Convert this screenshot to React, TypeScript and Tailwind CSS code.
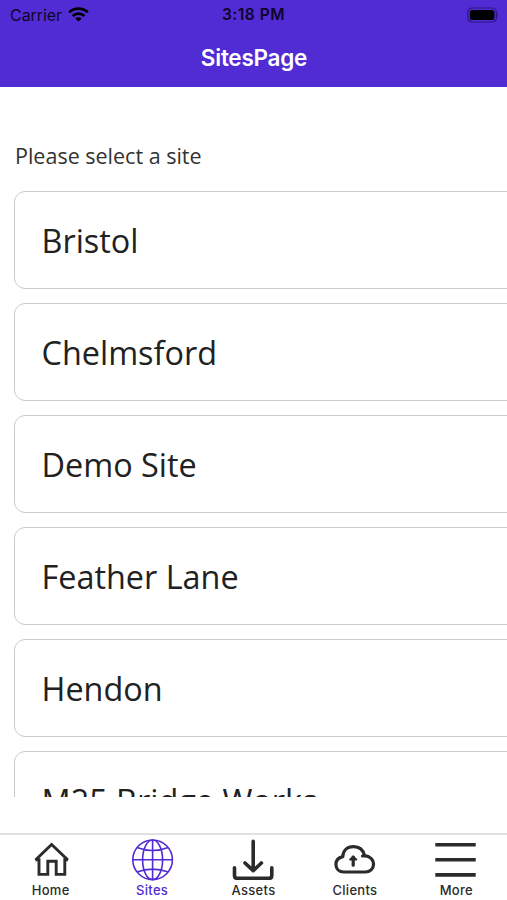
import type { ReactNode } from "react"
import clsx from "clsx"

const sites = ["Bristol", "Chelmsford", "Demo Site", "Feather Lane", "Hendon", "M25 Bridge Works"]

type Tab = {
  label: string
  active?: boolean
  icon: ReactNode
}

const tabs: Tab[] = [
  {
    label: "Home",
    icon: (
      <g strokeWidth="2.9">
        <path d="M6.5 22 22.6 6.4 38.9 22" strokeLinejoin="miter" />
        <path d="M6.5 21.8H10V36.4H18.8V23.2H27.2V36.4H35.8V21.8H38.9" />
      </g>
    ),
  },
  {
    label: "Sites",
    active: true,
    icon: (
      <g strokeWidth="1.6">
        <circle cx="22.6" cy="21.8" r="19.8" />
        <ellipse cx="22.6" cy="21.8" rx="10" ry="19.8" />
        <path d="M22.6 2V41.6M2.8 21.8H42.4M6.9 9.5Q22.6 15.5 38.3 9.5M6.9 34.1Q22.6 28.1 38.3 34.1" />
      </g>
    ),
  },
  {
    label: "Assets",
    icon: (
      <g strokeWidth="3.6" strokeLinecap="round" strokeLinejoin="round">
        <path d="M22.2 3.4V32M14 25 22.2 32.6 30.4 25" />
        <path d="M3.5 29.8V37.4Q3.5 40.3 6.4 40.3H37.9Q40.8 40.3 40.8 37.4V29.8" />
      </g>
    ),
  },
  {
    label: "Clients",
    icon: (
      <g strokeWidth="3.2" strokeLinejoin="round" strokeLinecap="round">
        <path d="M10.8 34H32.2C37 34 40.5 30.8 40.5 26.4C40.5 21.4 36.8 18.2 31.5 17.6C30.2 11.8 26.2 8.6 20.6 8.6C14 8.6 10 12.8 9.8 18.6C5.6 19.6 2.9 22.4 2.9 26.2C2.9 30.8 6.2 34 10.8 34Z" />
        <path d="M31.5 17.6 29.5 18" />
        <path d="M20.2 27.2V19" strokeWidth="3.2" />
        <path d="M17 21.6 20.2 18.4 23.4 21.6Z" strokeWidth="1.8" fill="currentColor" />
      </g>
    ),
  },
  {
    label: "More",
    icon: <path d="M1.3 6.7H41.7M1.3 21.8H41.7M1.3 36.9H41.7" strokeWidth="3.6" />,
  },
]

function StatusBar() {
  return (
    <div className="grid h-7 grid-cols-3 items-center pt-px pr-2 pl-2.5 text-[#0d0628]">
      <div className="flex items-center gap-1.5">
        <span className="text-[16px] tracking-[-0.05px]">Carrier</span>
        <svg width="21" height="15" viewBox="0 0 21 15" fill="none" stroke="#000" strokeWidth="2.7">
          <path d="M1.2 5.2C6.4 .4 14.6 .4 19.8 5.2" />
          <path d="M4.6 8.9C8 5.9 13 5.9 16.4 8.9" />
          <path d="M10.5 14.6 7.2 11.4C9.1 9.8 11.9 9.8 13.8 11.4Z" fill="#000" stroke="none" />
        </svg>
      </div>
      <span className="-ml-0.5 text-center text-[15.5px] font-semibold tracking-[0.5px]">3:18 PM</span>
      <svg className="justify-self-end" width="33" height="16" viewBox="0 0 33 16">
        <rect x="1.8" y="1" width="28.6" height="14" rx="4.4" fill="none" stroke="#2c1682" strokeWidth="1.2" />
        <rect x="3.8" y="3" width="24.6" height="10" rx="2.6" fill="#000" />
        <path d="M31.4 5.8Q33 8 31.4 10.2Z" fill="#2c1682" />
      </svg>
    </div>
  )
}

export default function App() {
  return (
    <div className="flex h-[900px] w-[507px] flex-col overflow-hidden bg-white font-['Inter',sans-serif]">
      {/* Header */}
      <header className="h-[87px] shrink-0 bg-[#512bd4]">
        <StatusBar />
        <h1 className="mt-3.5 pl-px text-center text-[22.5px] leading-8 font-semibold tracking-[-0.25px] text-white">
          SitesPage
        </h1>
      </header>

      {/* Site list */}
      <main className="flex h-[710px] shrink-0 flex-col overflow-hidden pt-[54px] pl-3.5 font-['Open_Sans',sans-serif] text-[#212121]">
        <p className="h-[50px] shrink-0 pl-px text-[21.5px] leading-[30px] text-[#333]">Please select a site</p>
        <ul className="flex flex-col gap-3.5">
          {sites.map((site) => (
            <li
              key={site}
              className="flex h-[98px] w-[520px] shrink-0 items-center rounded-[11px] border-[1.5px] border-[#cbcbcb] pl-[26.5px] text-[32.4px]"
            >
              {site}
            </li>
          ))}
        </ul>
      </main>

      {/* Tab bar */}
      <nav className="mt-auto grid h-[67px] grid-cols-5 border-t-2 border-[#e0e0e0]">
        {tabs.map(({ label, active, icon }) => (
          <a
            key={label}
            href="#"
            className={clsx("flex flex-col items-center pt-[3px]", active ? "text-[#512bd4]" : "text-[#2b2b2b]")}
          >
            <svg width="44" height="44" viewBox="0 0 44 44" fill="none" stroke="currentColor" className="shrink-0">
              {icon}
            </svg>
            <span className="text-[13px] leading-4 font-medium tracking-[0.3px]">{label}</span>
          </a>
        ))}
      </nav>
    </div>
  )
}
